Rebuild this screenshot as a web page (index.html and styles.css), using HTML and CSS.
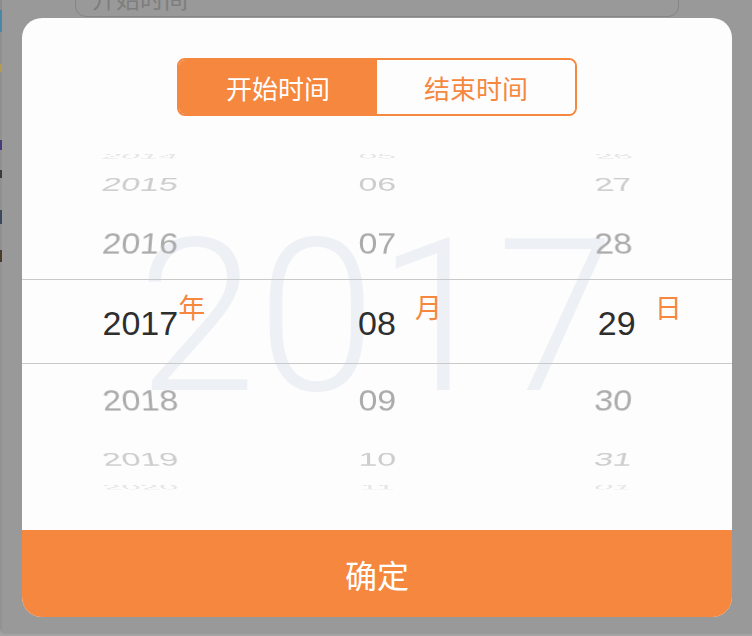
FILE: index.html
```html
<!DOCTYPE html>
<html lang="zh-CN">
<head>
<meta charset="utf-8">
<title>选择时间</title>
<link rel="stylesheet" href="styles.css">
</head>
<body>
<div class="screen">
  <div class="behind-field"><span>开始时间</span></div>
  <div class="edge-strip"></div>
  <div class="modal">
    <div class="seg">
      <div class="seg-item active">开始时间</div>
      <div class="seg-item">结束时间</div>
    </div>
    <div class="picker">
      <div class="watermark">2017</div>
      <div class="row d3 up"><span class="cell">2014</span><span class="cell">05</span><span class="cell">26</span></div>
      <div class="row d2 up"><span class="cell">2015</span><span class="cell">06</span><span class="cell">27</span></div>
      <div class="row d1 up"><span class="cell">2016</span><span class="cell">07</span><span class="cell">28</span></div>
      <div class="row sel">
        <span class="cell">2017<em class="unit">年</em></span>
        <span class="cell">08<em class="unit">月</em></span>
        <span class="cell">29<em class="unit">日</em></span>
      </div>
      <div class="row d1 down"><span class="cell">2018</span><span class="cell">09</span><span class="cell">30</span></div>
      <div class="row d2 down"><span class="cell">2019</span><span class="cell">10</span><span class="cell">31</span></div>
      <div class="row d3 down"><span class="cell">2020</span><span class="cell">11</span><span class="cell">01</span></div>
    </div>
    <button class="confirm" type="button">确定</button>
  </div>
</div>
</body>
</html>
```

FILE: styles.css
```css
* { box-sizing: border-box; }

html, body {
  margin: 0;
  padding: 0;
  width: 752px;
  height: 636px;
  overflow: hidden;
  background: #a3a3a3;
}

.screen {
  position: relative;
  width: 752px;
  height: 634px;
  background: #999999;
  border-bottom-left-radius: 6px;
  overflow: hidden;
  padding-top: 18px;
  font-family: "Liberation Sans", "Noto Sans CJK SC", sans-serif;
}

.behind-field {
  position: absolute;
  left: 75px;
  top: -36px;
  width: 604px;
  height: 53px;
  border: 1px solid #858585;
  border-radius: 11px;
  padding: 21px 0 0 16px;
  font-family: "Noto Sans CJK SC", sans-serif;
  font-size: 24px;
  line-height: 1;
  color: #7e7e7e;
  overflow: hidden;
}

.edge-strip {
  position: absolute;
  left: 0;
  top: 0;
  width: 2px;
  height: 634px;
  background: linear-gradient(to bottom,
    #8c8c8c 0, #8c8c8c 10px,
    #4a86a8 10px, #4a86a8 32px,
    #8f8f8f 32px, #8f8f8f 64px,
    #b59a52 64px, #b59a52 72px,
    #909090 72px, #909090 140px,
    #4a3a7a 140px, #4a3a7a 150px,
    #909090 150px, #909090 170px,
    #3a3a3a 170px, #3a3a3a 178px,
    #909090 178px, #909090 210px,
    #3a4a5a 210px, #3a4a5a 224px,
    #909090 224px, #909090 250px,
    #4a3a2a 250px, #4a3a2a 262px,
    #929292 262px);
}

.modal {
  position: relative;
  margin-left: 22px;
  width: 710px;
  height: 599px;
  background: #fdfdfd;
  border-radius: 20px;
  overflow: hidden;
  display: flex;
  flex-direction: column;
  align-items: center;
}

.seg {
  margin-top: 40px;
  width: 400px;
  height: 58px;
  border: 2px solid #f5873f;
  border-radius: 8px;
  overflow: hidden;
  display: flex;
  flex-shrink: 0;
}

.seg-item {
  flex: 1;
  display: flex;
  align-items: center;
  justify-content: center;
  font-family: "Noto Sans CJK SC", sans-serif;
  font-size: 26px;
  color: #f5873f;
  background: #fdfdfd;
}

.seg-item.active {
  background: #f5873f;
  color: #ffffff;
}

.picker {
  position: relative;
  margin-top: 35px;
  width: 100%;
  display: flex;
  flex-direction: column;
}

.watermark {
  position: absolute;
  left: 0;
  right: 0;
  top: 59px;
  text-align: center;
  font-family: Roboto, "Liberation Sans", sans-serif;
  font-weight: 300;
  font-size: 214px;
  line-height: 214px;
  letter-spacing: 1px;
  color: #edf0f5;
  z-index: 0;
  pointer-events: none;
}

.row {
  position: relative;
  z-index: 1;
  display: grid;
  grid-template-columns: repeat(3, 1fr);
  grid-template-rows: 100%;
  align-items: center;
}

.cell {
  position: relative;
  display: block;
  text-align: center;
  font-size: 34px;
  line-height: 38px;
  white-space: nowrap;
}

.row .cell:nth-child(1) { transform-origin: 355px 50%; }
.row .cell:nth-child(2) { transform-origin: 50% 50%; }
.row .cell:nth-child(3) { transform-origin: -118px 50%; }

.d3 { height: 10px; color: #e6e6e6; }
.d2 { height: 46px; color: #cdcdcd; }
.d1 { height: 72px; color: #ababab; }

.d3.up .cell { transform: perspective(1500px) rotateX(78deg); }
.d2.up .cell { transform: perspective(1500px) rotateX(56deg); }
.d1.up .cell { transform: perspective(1500px) rotateX(28deg); }
.d1.down .cell { transform: perspective(1500px) rotateX(-28deg); }
.d2.down .cell { transform: perspective(1500px) rotateX(-56deg); }
.d3.down .cell { transform: perspective(1500px) rotateX(-78deg); }

.sel {
  height: 85px;
  border-top: 1px solid #c9c9c9;
  border-bottom: 1px solid #c9c9c9;
  color: #2e2e2e;
}

.sel .cell { padding-top: 2px; }
.sel .cell:nth-child(3) { left: 3px; }

.unit {
  position: absolute;
  left: calc(50% + 38px);
  top: -9px;
  font-style: normal;
  font-family: "Noto Sans CJK SC", sans-serif;
  font-size: 27px;
  line-height: 1;
  color: #f5873f;
}

.sel .cell:nth-child(3) .unit { left: calc(50% + 38px); }

.confirm {
  margin-top: auto;
  width: 100%;
  height: 87px;
  flex-shrink: 0;
  border: none;
  padding: 0;
  background: #f5873f;
  color: #ffffff;
  font-family: "Noto Sans CJK SC", sans-serif;
  font-size: 32px;
}
```
